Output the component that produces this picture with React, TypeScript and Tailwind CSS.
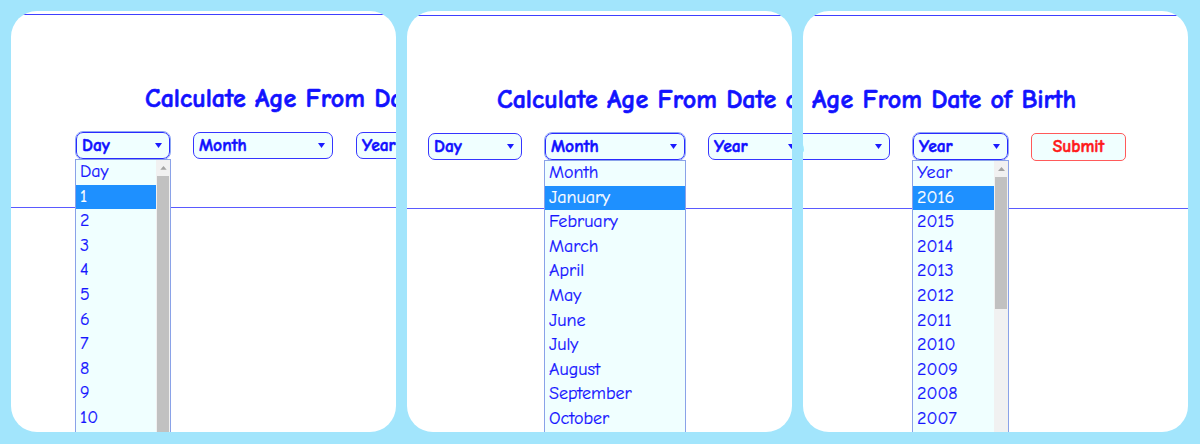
const font = "font-['Comic_Sans_MS','Comic_Neue','Noto_Sans',sans-serif]";

type Open = 'day' | 'month' | 'year';

const days = ['Day', '1', '2', '3', '4', '5', '6', '7', '8', '9', '10', '11', '12'];
const months = ['Month', 'January', 'February', 'March', 'April', 'May', 'June', 'July', 'August', 'September', 'October', 'November'];
const years = ['Year', '2016', '2015', '2014', '2013', '2012', '2011', '2010', '2009', '2008', '2007', '2006'];

function Arrow() {
  return (
    <svg width="7" height="5" viewBox="0 0 7 5" className="shrink-0">
      <path d="M0 0 H7 L3.5 5 Z" fill="#1c1cff" />
    </svg>
  );
}

function DropList({ items, thumbClass }: { items: string[]; thumbClass?: string }) {
  return (
    <div className="absolute top-full left-[-1px] right-[-1px] h-[290px] border border-[#8aa2e8] bg-[#f0ffff] flex overflow-hidden">
      <div className="flex-1">
        {items.map((item, i) => (
          <div
            key={item}
            className={
              i === 1
                ? 'h-[24.6px] leading-[24.6px] pl-[4px] text-[18px] bg-[#1e90ff] text-white [-webkit-text-stroke:0.2px_#ffffff]'
                : 'h-[24.6px] leading-[24.6px] pl-[4px] text-[18px] text-[#1515ff] [-webkit-text-stroke:0.2px_#1515ff]'
            }
          >
            {item}
          </div>
        ))}
      </div>
      {thumbClass && (
        <div className="w-[14px] bg-[#f1f1f1] flex flex-col items-center">
          <svg width="7" height="4" viewBox="0 0 7 4" className="mt-[6px] mb-[6px]">
            <path d="M0 4 L3.5 0 L7 4 Z" fill="#a3a3a3" />
          </svg>
          <div className={thumbClass} />
        </div>
      )}
    </div>
  );
}

function Select({
  label,
  width,
  open,
  items,
  thumbClass,
}: {
  label: string;
  width: string;
  open: boolean;
  items: string[];
  thumbClass?: string;
}) {
  return (
    <div className={`relative ${width} shrink-0`}>
      <div
        className={
          open
            ? 'h-[27px] flex items-center justify-between pl-[5px] pr-[7px] rounded-[7px] border border-[#2a2aff] bg-[#f0ffff] outline outline-1 outline-[#8fa8f4]'
            : 'h-[27px] flex items-center justify-between pl-[5px] pr-[7px] rounded-[7px] border border-[#3535ff] bg-[#f0ffff]'
        }
      >
        <span className="text-[17.5px] font-bold text-[#1010ff] leading-none [-webkit-text-stroke:0.5px_#1010ff]">
          {label}
        </span>
        <Arrow />
      </div>
      {open && <DropList items={items} thumbClass={thumbClass} />}
    </div>
  );
}

function Page({ open }: { open: Open }) {
  return (
    <div className={`w-[640px] ${font}`}>
      <div className="h-[4px]" />
      <div className="border-t-[1.5px] border-[#3f3fff]" />
      <h1 className="mt-[70px] pl-[134px] h-[28px] text-[26px] leading-[28px] font-bold text-[#1212ff] whitespace-nowrap [-webkit-text-stroke:0.6px_#1212ff]">
        Calculate Age From Date of Birth
      </h1>
      <div className="mt-[19px] pl-[65px] flex gap-[23px] items-start">
        <Select
          label="Day"
          width="w-[94px]"
          open={open === 'day'}
          items={days}
          thumbClass="w-[12px] h-[300px] bg-[#c1c1c1]"
        />
        <Select label="Month" width="w-[140px]" open={open === 'month'} items={months} />
        <Select
          label="Year"
          width="w-[95px]"
          open={open === 'year'}
          items={years}
          thumbClass="w-[12px] h-[132px] bg-[#c1c1c1]"
        />
        <button className="w-[95px] h-[28px] rounded-[5px] border border-[#ff5a5a] bg-[#f0ffff] text-[17.5px] font-bold text-[#ff1a1a] leading-none [-webkit-text-stroke:0.5px_#ff1a1a]">
          Submit
        </button>
      </div>
      <div className="mt-[47px] border-t-[1.5px] border-[#5a5aff]" />
    </div>
  );
}

export default function App() {
  return (
    <div className="w-[1200px] h-[444px] bg-[#a2e5fc] flex gap-[11px] pl-[11px] pt-[11px]">
      <div className="w-[385px] h-[421px] rounded-[26px] bg-white overflow-hidden">
        <div className="-mt-[1px]">
          <Page open="day" />
        </div>
      </div>
      <div className="w-[385px] h-[421px] rounded-[26px] bg-white overflow-hidden">
        <div className="-ml-[44px]">
          <Page open="month" />
        </div>
      </div>
      <div className="w-[385px] h-[421px] rounded-[26px] bg-white overflow-hidden">
        <div className="-ml-[235px]">
          <Page open="year" />
        </div>
      </div>
    </div>
  );
}
